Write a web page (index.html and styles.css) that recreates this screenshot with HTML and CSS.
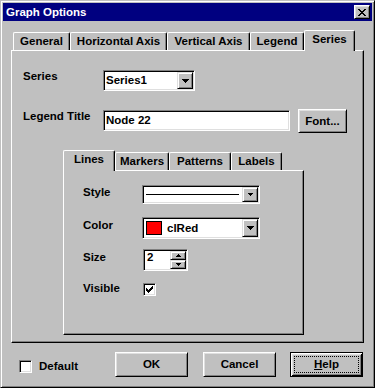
FILE: index.html
```html
<!DOCTYPE html>
<html>
<head>
<meta charset="utf-8">
<title>Graph Options</title>
<link rel="stylesheet" href="styles.css">
</head>
<body>
<div class="window">
  <div class="titlebar">
    <span class="title">Graph Options</span>
    <span class="close"><svg width="8" height="7" viewBox="0 0 8 7" shape-rendering="crispEdges"><path d="M0 0h2v1h-2zM6 0h2v1h-2zM1 1h2v1h-2zM5 1h2v1h-2zM2 2h4v1h-4zM3 3h2v1h-2zM2 4h4v1h-4zM1 5h2v1h-2zM5 5h2v1h-2zM0 6h2v1h-2zM6 6h2v1h-2z"/></svg></span>
  </div>
  <div class="body">
    <div class="tabs">
      <div class="tab t-general">General</div>
      <div class="tab t-horiz">Horizontal Axis</div>
      <div class="tab t-vert">Vertical Axis</div>
      <div class="tab t-legend">Legend</div>
      <div class="tab active t-series">Series</div>
    </div>
    <div class="panel outer-panel">
      <div class="row row-series">
        <span class="lbl lbl-outer">Series</span>
        <div class="field combo combo-series">
          <span class="val">Series1</span>
          <span class="dd"><svg width="7" height="4" viewBox="0 0 7 4" shape-rendering="crispEdges"><path d="M0 0h7v1h-7zM1 1h5v1h-5zM2 2h3v1h-3zM3 3h1v1h-1z"/></svg></span>
        </div>
      </div>
      <div class="row row-legend">
        <span class="lbl lbl-outer lbl-legend">Legend Title</span>
        <div class="field text-legend"><span class="val">Node 22</span></div>
        <div class="btn btn-font">Font...</div>
      </div>
      <div class="inner">
        <div class="tabs inner-tabs">
          <div class="tab active t-lines">Lines</div>
          <div class="tab t-markers">Markers</div>
          <div class="tab t-patterns">Patterns</div>
          <div class="tab t-labels">Labels</div>
        </div>
        <div class="panel inner-panel">
          <div class="irow irow-style">
            <span class="lbl lbl-inner lbl-style">Style</span>
            <div class="field combo combo-style">
              <span class="linesample"></span>
              <span class="dd"><svg width="5" height="3" viewBox="0 0 5 3" shape-rendering="crispEdges"><path d="M0 0h5v1h-5zM1 1h3v1h-3zM2 2h1v1h-1z"/></svg></span>
            </div>
          </div>
          <div class="irow irow-color">
            <span class="lbl lbl-inner lbl-color">Color</span>
            <div class="field combo combo-color">
              <span class="swatch"></span>
              <span class="val val-color">clRed</span>
              <span class="dd"><svg width="7" height="4" viewBox="0 0 7 4" shape-rendering="crispEdges"><path d="M0 0h7v1h-7zM1 1h5v1h-5zM2 2h3v1h-3zM3 3h1v1h-1z"/></svg></span>
            </div>
          </div>
          <div class="irow irow-size">
            <span class="lbl lbl-inner lbl-size">Size</span>
            <div class="field spin">
              <span class="val val-spin">2</span>
              <span class="spinbtns">
                <span class="sb"><svg width="5" height="3" viewBox="0 0 5 3" shape-rendering="crispEdges"><path d="M2 0h1v1h-1zM1 1h3v1h-3zM0 2h5v1h-5z"/></svg></span>
                <span class="sb"><svg width="5" height="3" viewBox="0 0 5 3" shape-rendering="crispEdges"><path d="M0 0h5v1h-5zM1 1h3v1h-3zM2 2h1v1h-1z"/></svg></span>
              </span>
            </div>
          </div>
          <div class="irow irow-visible">
            <span class="lbl lbl-inner">Visible</span>
            <span class="check check-visible"><svg width="7" height="7" viewBox="0 0 7 7" shape-rendering="crispEdges"><path d="M0 2h1v3h-1zM1 3h1v3h-1zM2 4h1v3h-1zM3 3h1v3h-1zM4 2h1v3h-1zM5 1h1v3h-1zM6 0h1v3h-1z"/></svg></span>
          </div>
        </div>
      </div>
    </div>
    <div class="footer">
      <div class="cbgroup">
        <span class="check"></span>
        <span class="cblabel">Default</span>
      </div>
      <div class="btn btn-dlg">OK</div>
      <div class="btn btn-dlg btn-cancel">Cancel</div>
      <div class="btn btn-dlg btn-default"><span class="focus"><u>H</u>elp</span></div>
    </div>
  </div>
</div>
</body>
</html>
```

FILE: styles.css
```css
* { box-sizing: border-box; }
html, body { margin: 0; padding: 0; }
body {
  background: #c0c0c0;
  color: #000;
  font-family: "Liberation Sans", Arial, sans-serif;
  font-weight: bold;
  font-size: 11.5px;
  line-height: 13px;
}
.window {
  width: 375px;
  height: 388px;
  border: 1px solid;
  border-color: #c0c0c0 #000 #000 #c0c0c0;
  box-shadow: inset 1px 1px #fff, inset -1px -1px #808080;
  padding: 2px;
  background: #c0c0c0;
  display: flex;
  flex-direction: column;
}
.titlebar {
  height: 18px;
  flex: none;
  background: #000080;
  color: #fff;
  display: flex;
  align-items: center;
  justify-content: space-between;
  padding: 0 2px 0 3px;
}
.title { line-height: 18px; }
.close {
  width: 16px;
  height: 14px;
  background: #c0c0c0;
  border: 1px solid;
  border-color: #fff #000 #000 #fff;
  box-shadow: inset 1px 1px #dfdfdf, inset -1px -1px #808080;
  display: flex;
  align-items: center;
  justify-content: center;
}
.close svg { display: block; fill: #000; }
svg { display: block; fill: #000; }

.body {
  flex: 1;
  padding: 9px 8px 0 8px;
  display: flex;
  flex-direction: column;
}
.tabs {
  display: flex;
  align-items: flex-end;
  height: 20px;
  padding-left: 2px;
}
.tab {
  height: 18px;
  border: 1px solid #fff;
  border-bottom: 0;
  border-right-color: #000;
  border-radius: 2px 2px 0 0;
  box-shadow: inset -1px 0 #808080;
  text-align: center;
  padding-top: 2px;
  white-space: nowrap;
  background: #c0c0c0;
}
.tab.active {
  height: 21px;
  margin-bottom: -1px;
  position: relative;
  z-index: 1;
}
.t-general { width: 57px; }
.t-horiz { width: 97px; }
.t-vert { width: 83px; }
.t-legend { width: 54px; }
.t-series { width: 51px; }

.panel {
  border: 1px solid;
  border-color: #fff #000 #000 #fff;
  box-shadow: inset -1px -1px #808080;
}
.outer-panel {
  height: 293px;
  padding: 19px 0 0 11px;
  flex: none;
}
.row {
  display: flex;
  align-items: flex-start;
}
.row-series { height: 21px; }
.row-legend { height: 24px; margin-top: 18px; }
.lbl { white-space: nowrap; }
.lbl-outer { width: 80px; }
.lbl-legend { margin-top: 1px; }

.field {
  background: #fff;
  border: 1px solid;
  border-color: #808080 #fff #fff #808080;
  box-shadow: inset 1px 1px #000, inset -1px -1px #dfdfdf;
  padding: 1px;
  display: flex;
  align-items: center;
}
.val { padding-left: 1px; white-space: nowrap; }
.combo-series { width: 92px; height: 21px; }
.dd {
  margin-left: auto;
  width: 16px;
  height: 100%;
  flex: none;
  background: #c0c0c0;
  border: 1px solid;
  border-color: #dfdfdf #000 #000 #dfdfdf;
  box-shadow: inset 1px 1px #fff, inset -1px -1px #808080;
  display: flex;
  align-items: center;
  justify-content: center;
}
.text-legend { width: 187px; height: 21px; margin-top: 1px; }

.btn {
  background: #c0c0c0;
  border: 1px solid;
  border-color: #fff #000 #000 #fff;
  box-shadow: inset 1px 1px #dfdfdf, inset -1px -1px #808080;
  display: flex;
  align-items: center;
  justify-content: center;
  white-space: nowrap;
}
.btn-font { width: 49px; height: 24px; margin-left: 8px; }

.inner { margin: 17px 0 0 40px; width: 241px; }
.inner-tabs { padding-left: 0; }
.t-lines { width: 52px; }
.t-markers { width: 54px; }
.t-patterns { width: 62px; }
.t-labels { width: 51px; }
.inner-panel {
  height: 165px;
  padding: 14px 0 0 19px;
}
.irow { display: flex; align-items: flex-start; }
.lbl-inner { width: 59px; }
.lbl-style { margin-top: 1px; }
.lbl-color { margin-top: 2px; }
.lbl-size { margin-top: 2px; }
.irow-style { height: 19px; }
.irow-color { height: 22px; margin-top: 13px; }
.irow-size { height: 22px; margin-top: 10px; }
.irow-visible { height: 14px; margin-top: 11px; }

.combo-style { width: 118px; height: 19px; }
.linesample {
  flex: 1;
  height: 1px;
  background: #000;
  margin: 0 3px 0 2px;
}
.combo-color { width: 118px; height: 22px; }
.swatch {
  width: 16px;
  height: 14px;
  background: #f00;
  border: 1px solid #000;
  margin-left: 2px;
  flex: none;
}
.val-color { padding-left: 5px; }

.spin {
  width: 45px;
  height: 22px;
  margin-left: 1px;
  align-items: flex-start;
}
.val-spin { padding-left: 2px; }
.spinbtns {
  margin-left: auto;
  width: 16px;
  height: 100%;
  display: flex;
  flex-direction: column;
}
.sb {
  flex: 1;
  background: #c0c0c0;
  border: 1px solid;
  border-color: #dfdfdf #000 #000 #dfdfdf;
  box-shadow: inset 1px 1px #fff, inset -1px -1px #808080;
  display: flex;
  align-items: center;
  justify-content: center;
}

.check {
  width: 13px;
  height: 13px;
  flex: none;
  background: #fff;
  border: 1px solid;
  border-color: #808080 #fff #fff #808080;
  box-shadow: inset 1px 1px #000, inset -1px -1px #dfdfdf;
  display: flex;
  align-items: center;
  justify-content: center;
}
.check-visible { margin: 1px 0 0 1px; }

.footer {
  display: flex;
  align-items: flex-start;
  margin-top: 9px;
  height: 25px;
}
.cbgroup {
  width: 96px;
  margin-left: 8px;
  margin-top: 7px;
  height: 15px;
  display: flex;
  align-items: center;
}
.cblabel { margin-left: 7px; }
.btn-dlg { width: 73px; height: 25px; }
.btn-cancel { margin-left: 15px; }
.btn-default {
  margin-left: 14px;
  border: 1px solid #000;
  box-shadow: inset 1px 1px #fff, inset -1px -1px #000, inset 2px 2px #dfdfdf, inset -2px -2px #808080;
  padding: 3px;
  align-items: stretch;
}
.focus {
  flex: 1;
  border: 1px dotted #000;
  display: flex;
  align-items: center;
  justify-content: center;
}
```
